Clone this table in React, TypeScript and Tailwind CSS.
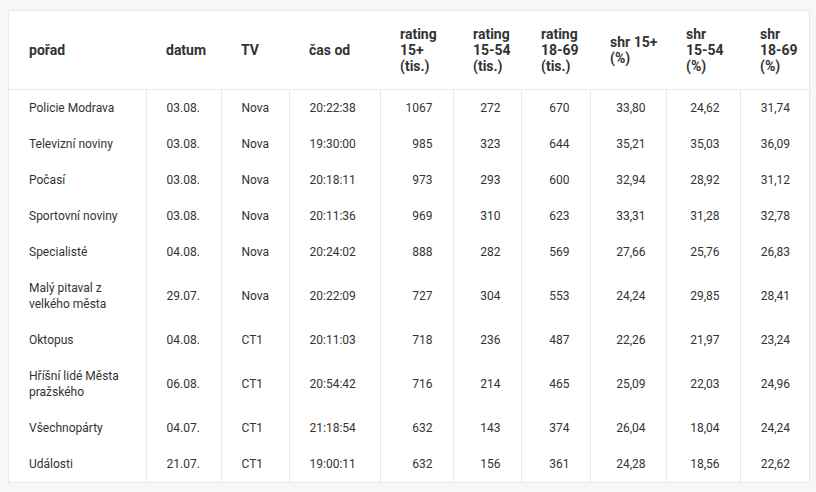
import React from 'react';

type Row = {
  porad: string;
  datum: string;
  tv: string;
  cas: string;
  r15: string;
  r1554: string;
  r1869: string;
  s15: string;
  s1554: string;
  s1869: string;
};

const rows: Row[] = [
  { porad: 'Policie Modrava', datum: '03.08.', tv: 'Nova', cas: '20:22:38', r15: '1067', r1554: '272', r1869: '670', s15: '33,80', s1554: '24,62', s1869: '31,74' },
  { porad: 'Televizní noviny', datum: '03.08.', tv: 'Nova', cas: '19:30:00', r15: '985', r1554: '323', r1869: '644', s15: '35,21', s1554: '35,03', s1869: '36,09' },
  { porad: 'Počasí', datum: '03.08.', tv: 'Nova', cas: '20:18:11', r15: '973', r1554: '293', r1869: '600', s15: '32,94', s1554: '28,92', s1869: '31,12' },
  { porad: 'Sportovní noviny', datum: '03.08.', tv: 'Nova', cas: '20:11:36', r15: '969', r1554: '310', r1869: '623', s15: '33,31', s1554: '31,28', s1869: '32,78' },
  { porad: 'Specialisté', datum: '04.08.', tv: 'Nova', cas: '20:24:02', r15: '888', r1554: '282', r1869: '569', s15: '27,66', s1554: '25,76', s1869: '26,83' },
  { porad: 'Malý pitaval z velkého města', datum: '29.07.', tv: 'Nova', cas: '20:22:09', r15: '727', r1554: '304', r1869: '553', s15: '24,24', s1554: '29,85', s1869: '28,41' },
  { porad: 'Oktopus', datum: '04.08.', tv: 'CT1', cas: '20:11:03', r15: '718', r1554: '236', r1869: '487', s15: '22,26', s1554: '21,97', s1869: '23,24' },
  { porad: 'Hříšní lidé Města pražského', datum: '06.08.', tv: 'CT1', cas: '20:54:42', r15: '716', r1554: '214', r1869: '465', s15: '25,09', s1554: '22,03', s1869: '24,96' },
  { porad: 'Všechnopárty', datum: '04.07.', tv: 'CT1', cas: '21:18:54', r15: '632', r1554: '143', r1869: '374', s15: '26,04', s1554: '18,04', s1869: '24,24' },
  { porad: 'Události', datum: '21.07.', tv: 'CT1', cas: '19:00:11', r15: '632', r1554: '156', r1869: '361', s15: '24,28', s1554: '18,56', s1869: '22,62' },
];

const widths = [137, 75, 68, 91, 73, 68, 69, 76, 74, 70];

const headers: React.ReactNode[] = [
  'pořad',
  'datum',
  'TV',
  'čas od',
  <>rating<br />15+<br />(tis.)</>,
  <>rating<br />15-54<br />(tis.)</>,
  <>rating<br />18-69<br />(tis.)</>,
  <>shr 15+<br />(%)</>,
  <>shr<br />15-54<br />(%)</>,
  <>shr<br />18-69<br />(%)</>,
];

export default function App() {
  return (
    <div className="min-h-screen bg-[#f7f7f7] pt-[10px] pl-2 font-['Roboto',sans-serif]">
      <div className="w-[802px] border border-[#e8e8e8] bg-white">
        <table className="w-[800px] table-fixed border-collapse">
          <colgroup>
            {widths.map((w, i) => (
              <col key={i} style={{ width: w }} />
            ))}
          </colgroup>
          <thead>
            <tr className="h-[78px] border-b border-[#e8e8e8]">
              {headers.map((h, i) => (
                <th key={i} className="whitespace-nowrap pl-5 pr-1 text-left align-middle text-[14px] font-bold leading-4 text-[#333]">
                  {h}
                </th>
              ))}
            </tr>
          </thead>
          <tbody className="text-[12px] leading-4 text-[#333]">
            {rows.map((r, i) => (
              <tr key={i}>
                <td className="px-5 py-[10px] align-middle">{r.porad}</td>
                <td className="border-l border-[#e8e8e8] px-5 py-[10px] align-middle">{r.datum}</td>
                <td className="border-l border-[#e8e8e8] px-5 py-[10px] align-middle">{r.tv}</td>
                <td className="border-l border-[#e8e8e8] px-5 py-[10px] align-middle">{r.cas}</td>
                {[r.r15, r.r1554, r.r1869, r.s15, r.s1554, r.s1869].map((v, j) => (
                  <td key={j} className="border-l border-[#e8e8e8] px-5 py-[10px] text-right align-middle">
                    {v}
                  </td>
                ))}
              </tr>
            ))}
          </tbody>
        </table>
      </div>
    </div>
  );
}
